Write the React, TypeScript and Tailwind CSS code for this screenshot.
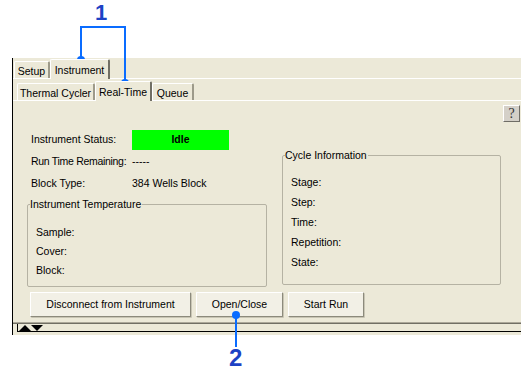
import React from 'react';

const Tab = ({ label, active, width }: { label: string; active?: boolean; width: string }) => (
  <div
    className={
      active
        ? `relative z-10 -mb-px h-[20px] ${width} flex items-start justify-center pt-[3px] whitespace-nowrap bg-[#ECE9D8] border-t border-l border-white border-r-2 border-r-[#716f64] rounded-t-[2px]`
        : `h-[17px] ${width} flex items-start justify-center pt-[2px] whitespace-nowrap bg-[#ECE9D8] border-t border-l border-white border-r-2 border-r-[#9d9a8a] rounded-t-[2px]`
    }
  >
    {label}
  </div>
);

const Row = ({ label, value, tight }: { label: string; value?: string; tight?: boolean }) => (
  <div className="flex h-[22px] items-center pl-[4px] whitespace-nowrap">
    <span className={tight ? 'w-[101px] tracking-[-0.3px]' : 'w-[101px]'}>{label}</span>
    {value && <span>{value}</span>}
  </div>
);

const GroupBox = ({
  title,
  items,
  className,
  step,
}: {
  title: string;
  items: string[];
  className: string;
  step: string;
}) => (
  <fieldset className={`border border-[#b5b2a3] rounded-[2px] ${className}`}>
    <legend className="ml-[2px] pr-[1px] leading-[13px]">{title}</legend>
    <div className="flex flex-col pl-[8px]">
      {items.map((it) => (
        <div key={it} className={`flex items-center ${step}`}>
          {it}
        </div>
      ))}
    </div>
  </fieldset>
);

const XpButton = ({ label, width }: { label: string; width: string }) => (
  <button
    className={`h-[25px] ${width} flex items-center justify-center whitespace-nowrap bg-[#f2f0e6] border border-t-white border-l-white border-r-[#8c8a7c] border-b-[#8c8a7c] shadow-[1px_1px_0_#c8c5b4] rounded-[1px]`}
  >
    {label}
  </button>
);

export default function App() {
  return (
    <div
      className="relative w-[521px] h-[370px] bg-white overflow-hidden text-[10.5px] text-black"
      style={{ fontFamily: '"Liberation Sans", Arial, sans-serif' }}
    >
      <div className="pt-[58px] pl-[12px]">
        <div className="w-[509px] h-[277px] bg-[#ECE9D8] border-l border-black flex flex-col">
          {/* outer tabs */}
          <div className="h-[20px] flex items-end pl-[1px]">
            <Tab label="Setup" width="w-[36px]" />
            <Tab label="Instrument" width="w-[60px]" active />
          </div>
          <div className="flex-1 flex flex-col border-t border-white">
            {/* inner tabs */}
            <div className="h-[21px] flex items-end pl-[4px]">
              <Tab label="Thermal Cycler" width="w-[78px]" />
              <Tab label="Real-Time" width="w-[57px]" active />
              <Tab label="Queue" width="w-[42px]" />
            </div>
            <div className="h-[222px] flex flex-col border-t border-white">
              <div className="flex justify-end pt-[4px] pr-[1px]">
                <div
                  className="w-[17px] h-[17px] flex items-center justify-center bg-[#d4d0c8] border border-t-white border-l-white border-r-[#6f6d66] border-b-[#6f6d66] text-[14px] text-[#333]"
                  style={{ fontFamily: '"Liberation Serif", serif' }}
                >
                  ?
                </div>
              </div>
              <div className="flex mt-[7px]">
                <div className="w-[257px] pl-[14px] flex flex-col">
                  <div className="flex h-[22px] items-center pl-[4px] whitespace-nowrap">
                    <span className="w-[101px]">Instrument Status:</span>
                    <span className="w-[97px] h-[20px] bg-[#00ff00] flex items-center justify-center font-bold">
                      Idle
                    </span>
                  </div>
                  <Row label="Run Time Remaining:" value="-----" tight />
                  <Row label="Block Type:" value="384 Wells Block" />
                  <GroupBox
                    title="Instrument Temperature"
                    items={['Sample:', 'Cover:', 'Block:']}
                    className="mt-[3px] w-[240px] h-[89px] pt-[12px]"
                    step="h-[19px]"
                  />
                </div>
                <div className="ml-[12px] pt-[20px]">
                  <GroupBox
                    title="Cycle Information"
                    items={['Stage:', 'Step:', 'Time:', 'Repetition:', 'State:']}
                    className="w-[219px] h-[136px] pt-[11px]"
                    step="h-[20px]"
                  />
                </div>
              </div>
              <div className="mt-auto pb-[5px] pl-[17px] flex gap-[5px]">
                <XpButton label="Disconnect from Instrument" width="w-[161px]" />
                <XpButton label="Open/Close" width="w-[87px]" />
                <XpButton label="Start Run" width="w-[76px]" />
              </div>
            </div>
            {/* bottom edge */}
            <div className="h-[2px] border-t border-[#aca899] border-b border-b-[#716f64]" />
            <div className="ml-[4px] h-[8px] border-l border-b border-black flex items-center pl-[1px]">
              <svg width="25" height="6" viewBox="0 0 25 6">
                <polygon points="0,6 6,0 12,6" fill="#000" />
                <polygon points="12,0 24,0 18,6" fill="#000" />
              </svg>
            </div>
            <div className="h-[3px]" />
          </div>
        </div>
      </div>

      {/* callouts */}
      <svg className="absolute left-0 top-0 pointer-events-none" width="521" height="370">
        <path d="M81 60 V27 H125 V83" fill="none" stroke="#0a6cff" strokeWidth="2" />
        <circle cx="81" cy="60" r="4" fill="#0a6cff" />
        <circle cx="125" cy="83" r="4" fill="#0a6cff" />
        <path d="M236 315 V347" fill="none" stroke="#0a6cff" strokeWidth="2" />
        <circle cx="236" cy="315" r="4" fill="#0a6cff" />
      </svg>
      <span className="absolute left-[95px] top-[0px] text-[22px] font-bold leading-[26px] text-[#1d42c4]">1</span>
      <span className="absolute left-[229px] top-[345px] text-[24px] font-bold leading-[26px] text-[#1d42c4]">2</span>
    </div>
  );
}
